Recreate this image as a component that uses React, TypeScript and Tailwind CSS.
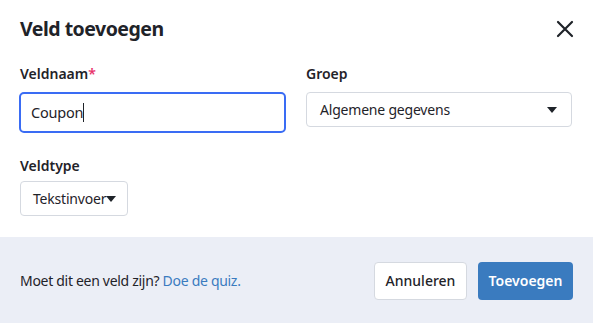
import React from "react";

const Caret = () => (
  <svg width="10" height="6" viewBox="0 0 10 6" className="shrink-0">
    <path d="M0 0 H10 L5 6 Z" fill="#1f2329" />
  </svg>
);

export default function App() {
  return (
    <div
      className="w-[593px] h-[323px] bg-white flex flex-col text-[#1f2329]"
      style={{ fontFamily: '"Noto Sans", "Open Sans", sans-serif' }}
    >
      <div className="flex-1 px-5">
        <div className="flex items-center justify-between h-[57px] pt-[1px]">
          <h1 className="text-[19.5px] font-bold tracking-[-0.5px]">Veld toevoegen</h1>
          <button className="-mr-[4px] w-6 h-6 flex items-center justify-center">
            <svg width="18" height="18" viewBox="0 0 18 18">
              <path d="M2 2 L16 16 M16 2 L2 16" stroke="#1f2329" strokeWidth="2.2" strokeLinecap="round" />
            </svg>
          </button>
        </div>
        <div className="flex gap-5 mt-[7px]">
          <div className="w-[266px] flex flex-col">
            <label className="text-[14px] font-semibold leading-[20px]">
              Veldnaam<span className="text-[#e8336b]">*</span>
            </label>
            <div className="mt-[8px] h-[41px] -ml-[1px] border-2 border-[#3a6cf4] rounded-[5px] flex items-center pl-[10px] text-[14.5px] tracking-[-0.2px]">
              Coupon<span className="w-[1px] h-[19px] bg-[#1f2329]" />
            </div>
          </div>
          <div className="w-[266px] flex flex-col">
            <label className="text-[14px] font-semibold leading-[20px]">Groep</label>
            <div className="mt-[8px] h-[35px] border border-[#d5d9e0] rounded-[4px] flex items-center justify-between pl-[13px] pr-[14px] text-[14px] tracking-[-0.2px]">
              <span>Algemene gegevens</span>
              <Caret />
            </div>
          </div>
        </div>
        <div className="flex flex-col mt-[23px]">
          <label className="text-[14px] font-semibold leading-[20px]">Veldtype</label>
          <div className="mt-[5px] w-[108px] h-[35px] border border-[#d5d9e0] rounded-[4px] flex items-center pl-[12px] text-[14px] tracking-[-0.2px]">
            <span>Tekstinvoer</span>
            <Caret />
          </div>
        </div>
      </div>
      <div className="h-[86px] bg-[#ebeef6] px-5 flex items-center justify-between">
        <p className="text-[14px] tracking-[-0.3px]">
          Moet dit een veld zijn? <span className="text-[#3a7bbf]">Doe de quiz.</span>
        </p>
        <div className="flex gap-[11px] pt-[1px]">
          <button className="h-[38px] w-[93px] bg-white border border-[#d5d9e0] rounded-[4px] text-[14px] font-medium">
            Annuleren
          </button>
          <button className="h-[38px] w-[95px] bg-[#3a7bbf] rounded-[4px] text-[14px] font-semibold text-white">
            Toevoegen
          </button>
        </div>
      </div>
    </div>
  );
}
